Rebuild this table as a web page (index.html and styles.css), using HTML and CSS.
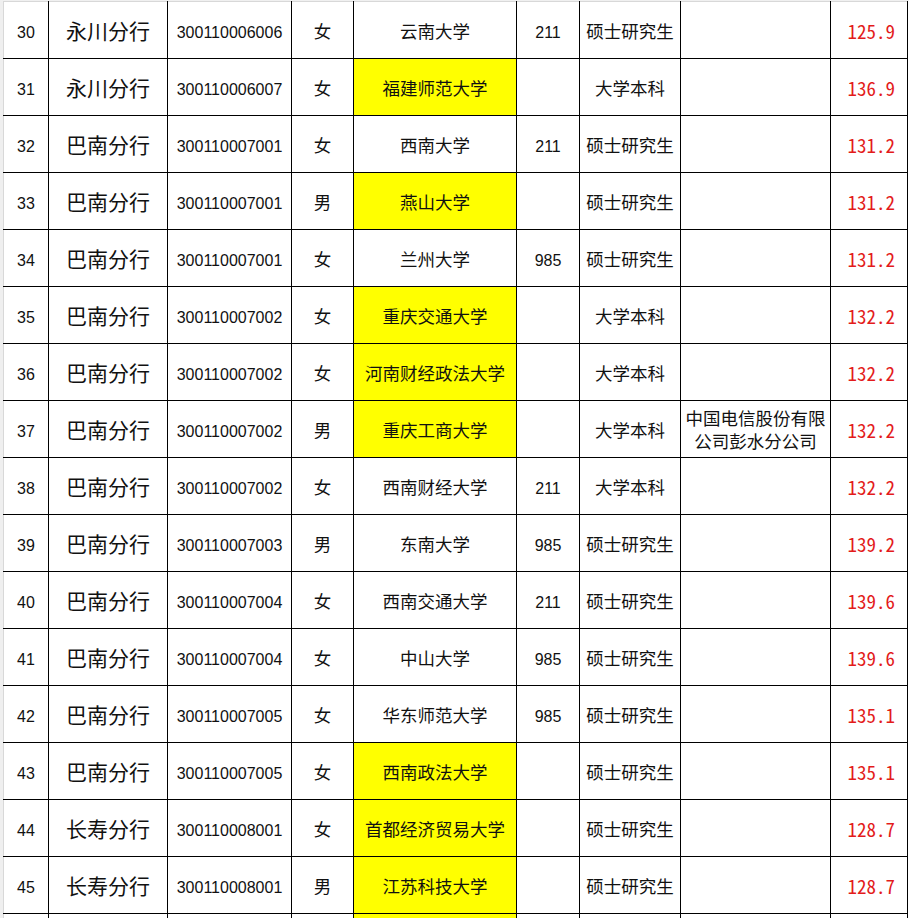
FILE: index.html
```html
<!DOCTYPE html>
<html lang="zh-CN">
<head>
<meta charset="utf-8">
<title>表格</title>
<link rel="stylesheet" href="styles.css">
</head>
<body>
<div class="frame">
<table class="sheet">
<colgroup>
<col class="c-no"><col class="c-branch"><col class="c-code"><col class="c-sex"><col class="c-uni"><col class="c-tag"><col class="c-deg"><col class="c-emp"><col class="c-score">
</colgroup>
<tbody>
<tr><td class="num">30</td><td class="branch">永川分行</td><td class="num">300110006006</td><td class="cjk">女</td><td class="cjk">云南大学</td><td class="num">211</td><td class="cjk">硕士研究生</td><td class="cjk"></td><td class="score">125.9</td></tr>
<tr><td class="num">31</td><td class="branch">永川分行</td><td class="num">300110006007</td><td class="cjk">女</td><td class="cjk hl">福建师范大学</td><td class="num"></td><td class="cjk">大学本科</td><td class="cjk"></td><td class="score">136.9</td></tr>
<tr><td class="num">32</td><td class="branch">巴南分行</td><td class="num">300110007001</td><td class="cjk">女</td><td class="cjk">西南大学</td><td class="num">211</td><td class="cjk">硕士研究生</td><td class="cjk"></td><td class="score">131.2</td></tr>
<tr><td class="num">33</td><td class="branch">巴南分行</td><td class="num">300110007001</td><td class="cjk">男</td><td class="cjk hl">燕山大学</td><td class="num"></td><td class="cjk">硕士研究生</td><td class="cjk"></td><td class="score">131.2</td></tr>
<tr><td class="num">34</td><td class="branch">巴南分行</td><td class="num">300110007001</td><td class="cjk">女</td><td class="cjk">兰州大学</td><td class="num">985</td><td class="cjk">硕士研究生</td><td class="cjk"></td><td class="score">131.2</td></tr>
<tr><td class="num">35</td><td class="branch">巴南分行</td><td class="num">300110007002</td><td class="cjk">女</td><td class="cjk hl">重庆交通大学</td><td class="num"></td><td class="cjk">大学本科</td><td class="cjk"></td><td class="score">132.2</td></tr>
<tr><td class="num">36</td><td class="branch">巴南分行</td><td class="num">300110007002</td><td class="cjk">女</td><td class="cjk hl">河南财经政法大学</td><td class="num"></td><td class="cjk">大学本科</td><td class="cjk"></td><td class="score">132.2</td></tr>
<tr><td class="num">37</td><td class="branch">巴南分行</td><td class="num">300110007002</td><td class="cjk">男</td><td class="cjk hl">重庆工商大学</td><td class="num"></td><td class="cjk">大学本科</td><td class="cjk emp">中国电信股份有限<br>公司彭水分公司</td><td class="score">132.2</td></tr>
<tr><td class="num">38</td><td class="branch">巴南分行</td><td class="num">300110007002</td><td class="cjk">女</td><td class="cjk">西南财经大学</td><td class="num">211</td><td class="cjk">大学本科</td><td class="cjk"></td><td class="score">132.2</td></tr>
<tr><td class="num">39</td><td class="branch">巴南分行</td><td class="num">300110007003</td><td class="cjk">男</td><td class="cjk">东南大学</td><td class="num">985</td><td class="cjk">硕士研究生</td><td class="cjk"></td><td class="score">139.2</td></tr>
<tr><td class="num">40</td><td class="branch">巴南分行</td><td class="num">300110007004</td><td class="cjk">女</td><td class="cjk">西南交通大学</td><td class="num">211</td><td class="cjk">硕士研究生</td><td class="cjk"></td><td class="score">139.6</td></tr>
<tr><td class="num">41</td><td class="branch">巴南分行</td><td class="num">300110007004</td><td class="cjk">女</td><td class="cjk">中山大学</td><td class="num">985</td><td class="cjk">硕士研究生</td><td class="cjk"></td><td class="score">139.6</td></tr>
<tr><td class="num">42</td><td class="branch">巴南分行</td><td class="num">300110007005</td><td class="cjk">女</td><td class="cjk">华东师范大学</td><td class="num">985</td><td class="cjk">硕士研究生</td><td class="cjk"></td><td class="score">135.1</td></tr>
<tr><td class="num">43</td><td class="branch">巴南分行</td><td class="num">300110007005</td><td class="cjk">女</td><td class="cjk hl">西南政法大学</td><td class="num"></td><td class="cjk">硕士研究生</td><td class="cjk"></td><td class="score">135.1</td></tr>
<tr><td class="num">44</td><td class="branch">长寿分行</td><td class="num">300110008001</td><td class="cjk">女</td><td class="cjk hl">首都经济贸易大学</td><td class="num"></td><td class="cjk">硕士研究生</td><td class="cjk"></td><td class="score">128.7</td></tr>
<tr><td class="num">45</td><td class="branch">长寿分行</td><td class="num">300110008001</td><td class="cjk">男</td><td class="cjk hl">江苏科技大学</td><td class="num"></td><td class="cjk">硕士研究生</td><td class="cjk"></td><td class="score">128.7</td></tr>
<tr><td class="num"></td><td class="branch"></td><td class="num"></td><td class="cjk"></td><td class="cjk hl"></td><td class="num"></td><td class="cjk"></td><td class="cjk"></td><td class="score"></td></tr>
</tbody>
</table>
</div>
</body>
</html>
```
FILE: styles.css
```css
html, body {
  margin: 0;
  padding: 0;
  background: #ffffff;
  overflow: hidden;
}
body {
  width: 909px;
  height: 918px;
}
.frame {
  border-left: 3px solid #efefef;
  border-top: 1px solid #f0f0f0;
  width: 906px;
}
.sheet {
  border-collapse: collapse;
  table-layout: fixed;
  width: 905px;
  background: #ffffff;
  color: #111111;
}
.c-no { width: 45px; }
.c-branch { width: 119px; }
.c-code { width: 124px; }
.c-sex { width: 62px; }
.c-uni { width: 163px; }
.c-tag { width: 63px; }
.c-deg { width: 101px; }
.c-emp { width: 150px; }
.c-score { width: 77px; }
.sheet tr {
  height: 57px;
}
.sheet td {
  border: 1px solid #000000;
  padding: 0;
  text-align: center;
  vertical-align: middle;
  white-space: nowrap;
  overflow: hidden;
}
.sheet tr:first-child td {
  border-top-color: #d8d8d8;
}
.sheet td:first-child {
  border-left-color: #d8d8d8;
}
.sheet td.num {
  font-family: "Liberation Sans", Arial, sans-serif;
  font-size: 16px;
  padding-top: 5px;
}
.branch {
  font-family: "Noto Sans CJK SC", sans-serif;
  font-size: 21px;
}
.cjk {
  font-family: "Noto Sans CJK SC", sans-serif;
  font-size: 17.5px;
}
.emp {
  line-height: 23px;
}
.hl {
  background: #ffff00;
}
.sheet td.score {
  font-family: "Noto Sans CJK SC", sans-serif;
  font-feature-settings: "hwid" 1;
  font-size: 19px;
  color: #e31b1b;
  text-align: right;
  padding-right: 12px;
}
```
